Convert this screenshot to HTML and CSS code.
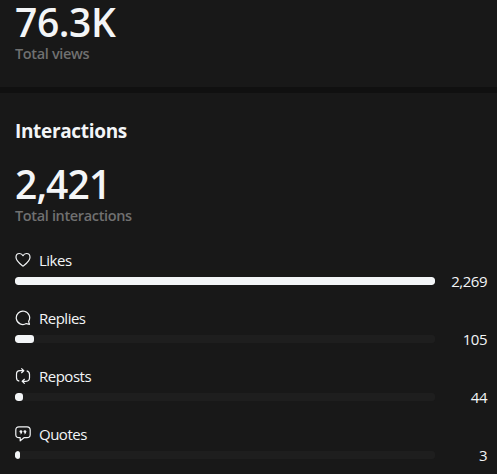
FILE: index.html
```html
<!DOCTYPE html>
<html lang="en">
<head>
<meta charset="utf-8">
<title>Insights</title>
<link rel="stylesheet" href="styles.css">
</head>
<body>
<section class="views">
  <div class="total views-number">76.3K</div>
  <div class="caption">Total views</div>
</section>
<section class="interactions">
  <h2 class="heading">Interactions</h2>
  <div class="total">2,421</div>
  <div class="caption">Total interactions</div>
  <div class="metrics">
    <div class="metric">
      <div class="label"><svg class="icon" viewBox="0 0 16 16"><path d="M8 14.1C5.5 12.2 1 9.4 1 5.3C1 2.9 2.6 1.5 4.5 1.5C6 1.5 7.3 2.3 8 3.7C8.7 2.3 10 1.5 11.5 1.5C13.4 1.5 15 2.9 15 5.3C15 9.4 10.5 12.2 8 14.1Z"/></svg><span>Likes</span></div>
      <div class="measure"><div class="track"><div class="fill" style="width:420px"></div></div><span class="value">2,269</span></div>
    </div>
    <div class="metric">
      <div class="label"><svg class="icon" viewBox="0 0 16 16"><path d="M13.6 11.4A6.7 6.7 0 1 0 11.3 13.6L14.5 14.4Z"/></svg><span>Replies</span></div>
      <div class="measure"><div class="track"><div class="fill" style="width:19px"></div></div><span class="value">105</span></div>
    </div>
    <div class="metric">
      <div class="label"><svg class="icon" viewBox="0 0 16 16"><path d="M4.3 13.2C2.5 12.8 1.5 11.5 1.5 9.7V6.2C1.5 4.1 2.9 2.7 5 2.7H8.6M6.3 .4L8.8 2.7L6.3 5M11.7 2.8C13.5 3.2 14.5 4.5 14.5 6.3V9.8C14.5 11.9 13.1 13.3 11 13.3H7.4M9.7 11L7.2 13.3L9.7 15.6"/></svg><span>Reposts</span></div>
      <div class="measure"><div class="track"><div class="fill" style="width:8px"></div></div><span class="value">44</span></div>
    </div>
    <div class="metric">
      <div class="label"><svg class="icon" viewBox="0 0 16 16"><path d="M4 .8H12Q15.2 .8 15.2 4V8.5Q15.2 11.7 12 11.7H9L5.2 14.8V11.7H4Q.8 11.7 .8 8.5V4Q.8 .8 4 .8Z"/><g class="marks"><circle cx="5.9" cy="5.6" r="1.4"/><circle cx="9.9" cy="5.6" r="1.4"/><path d="M7.3 5.5Q7.3 7.5 5.6 8.4L5.3 7.8Q6.2 7.1 6 6ZM11.3 5.5Q11.3 7.5 9.6 8.4L9.3 7.8Q10.2 7.1 10 6Z"/></g></svg><span>Quotes</span></div>
      <div class="measure"><div class="track"><div class="fill" style="width:5px"></div></div><span class="value">3</span></div>
    </div>
  </div>
</section>
</body>
</html>
```
FILE: styles.css
```css
* { box-sizing: border-box; }
body {
  margin: 0;
  height: 474px;
  overflow: hidden;
  background: #181818;
  color: #f3f5f7;
  font-family: "Open Sans", "Noto Sans", sans-serif;
  font-size: 15px;
}
.views {
  height: 93px;
  padding: 1px 15px 0;
  border-bottom: 6px solid #101010;
}
.total {
  height: 43px;
  font-size: 39px;
  font-weight: 600;
  line-height: 41px;
  letter-spacing: -0.9px;
}
.views-number { letter-spacing: -0.4px; }
.caption {
  height: 20px;
  font-size: 14.5px;
  font-weight: 600;
  line-height: 20px;
  letter-spacing: -0.35px;
  color: #707070;
}
.interactions { padding: 25px 10px 0 15px; }
.heading {
  margin: 0 0 19px;
  height: 26px;
  font-size: 19px;
  font-weight: 700;
  line-height: 26px;
  letter-spacing: -0.33px;
}
.metrics { padding-top: 24px; }
.metric { height: 58px; }
.label {
  display: flex;
  align-items: center;
  gap: 8px;
  height: 20px;
  line-height: 20px;
  letter-spacing: -0.5px;
}
.icon {
  width: 16px;
  height: 16px;
  fill: none;
  stroke: #f3f5f7;
  stroke-width: 1.2;
  stroke-linejoin: round;
}
.marks { fill: #f3f5f7; stroke: none; }
.measure {
  display: flex;
  align-items: center;
  justify-content: space-between;
  height: 22px;
}
.track {
  width: 420px;
  height: 8px;
  overflow: hidden;
  border-radius: 3px;
  background: #1e1e1e;
}
.fill {
  height: 8px;
  border-radius: 3px;
  background: #f3f5f7;
}
.value {
  line-height: 22px;
  letter-spacing: -0.5px;
}
```
